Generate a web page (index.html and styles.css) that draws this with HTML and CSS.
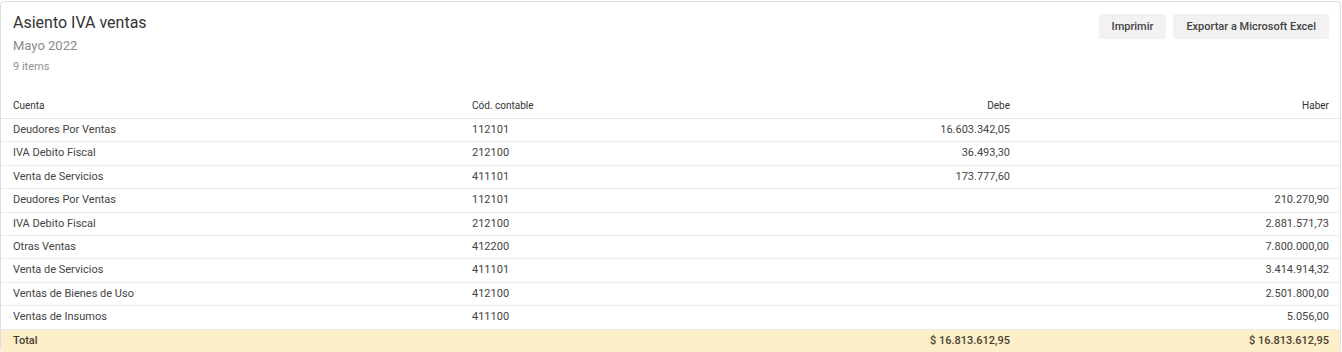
FILE: index.html
```html
<!DOCTYPE html>
<html lang="es">
<head>
<meta charset="utf-8">
<title>Asiento IVA ventas</title>
<link rel="stylesheet" href="styles.css">
</head>
<body>
<div class="card">
  <div class="card-head">
    <div class="titles">
      <h1 class="title">Asiento IVA ventas</h1>
      <div class="subtitle">Mayo 2022</div>
      <div class="count">9 items</div>
    </div>
    <div class="actions">
      <button class="btn">Imprimir</button>
      <button class="btn">Exportar a Microsoft Excel</button>
    </div>
  </div>
  <table class="grid">
    <colgroup>
      <col class="c1"><col class="c2"><col class="c3"><col class="c4">
    </colgroup>
    <thead>
      <tr><th>Cuenta</th><th>Cód. contable</th><th class="num">Debe</th><th class="num last">Haber</th></tr>
    </thead>
    <tbody>
      <tr><td>Deudores Por Ventas</td><td>112101</td><td class="num">16.603.342,05</td><td class="num last"></td></tr>
      <tr><td>IVA Debito Fiscal</td><td>212100</td><td class="num">36.493,30</td><td class="num last"></td></tr>
      <tr><td>Venta de Servicios</td><td>411101</td><td class="num">173.777,60</td><td class="num last"></td></tr>
      <tr><td>Deudores Por Ventas</td><td>112101</td><td class="num"></td><td class="num last">210.270,90</td></tr>
      <tr><td>IVA Debito Fiscal</td><td>212100</td><td class="num"></td><td class="num last">2.881.571,73</td></tr>
      <tr><td>Otras Ventas</td><td>412200</td><td class="num"></td><td class="num last">7.800.000,00</td></tr>
      <tr><td>Venta de Servicios</td><td>411101</td><td class="num"></td><td class="num last">3.414.914,32</td></tr>
      <tr><td>Ventas de Bienes de Uso</td><td>412100</td><td class="num"></td><td class="num last">2.501.800,00</td></tr>
      <tr><td>Ventas de Insumos</td><td>411100</td><td class="num"></td><td class="num last">5.056,00</td></tr>
    </tbody>
    <tfoot>
      <tr><td>Total</td><td></td><td class="num">$ 16.813.612,95</td><td class="num last">$ 16.813.612,95</td></tr>
    </tfoot>
  </table>
</div>
</body>
</html>
```
FILE: styles.css
```css
html, body {
  margin: 0;
  padding: 0;
  background: #ffffff;
}
body {
  font-family: Roboto, "Liberation Sans", Arial, sans-serif;
  color: #444;
  padding-top: 1px;
}
.card {
  border: 1px solid #dedede;
  border-radius: 4px;
  background: #fff;
  width: 1339px;
  overflow: hidden;
}
.card-head {
  display: flex;
  justify-content: space-between;
  align-items: flex-start;
  padding: 11px 11px 0 12px;
}
.title {
  margin: 0;
  font-size: 16px;
  font-weight: 400;
  line-height: 20px;
  color: #333;
}
.subtitle {
  margin-top: 5px;
  font-size: 13px;
  line-height: 16px;
  color: #8a8a8a;
}
.count {
  margin-top: 6px;
  font-size: 11px;
  line-height: 14px;
  color: #8f8f8f;
}
.actions {
  display: flex;
  gap: 7px;
  margin-top: 1px;
}
.btn {
  font-family: Roboto, "Liberation Sans", Arial, sans-serif;
  font-size: 11px;
  font-weight: 500;
  color: #444;
  background: #f2f2f2;
  border: none;
  border-radius: 2px;
  height: 25px;
  padding: 0 13px;
}
.grid {
  width: 100%;
  border-collapse: collapse;
  table-layout: fixed;
  margin-top: 15px;
}
.c1 { width: 459px; }
.c2 { width: 282px; }
.c3 { width: 280px; }
.c4 { width: auto; }
.grid th {
  font-size: 10px;
  font-weight: 400;
  color: #333;
  text-align: left;
  padding: 11px 12px 6px 12px;
  line-height: 12px;
  border-bottom: 1px solid #e6e6e6;
}
.grid td {
  font-size: 11px;
  color: #444;
  padding: 5px 12px;
  line-height: 12.4px;
  border-bottom: 1px solid #ececec;
  white-space: nowrap;
}
.grid .num {
  text-align: right;
}
.grid .last {
  padding-right: 11px;
}
.grid tfoot td {
  background: #fdefc9;
  font-weight: 500;
  color: #4a4030;
  border-bottom: none;
}
```
